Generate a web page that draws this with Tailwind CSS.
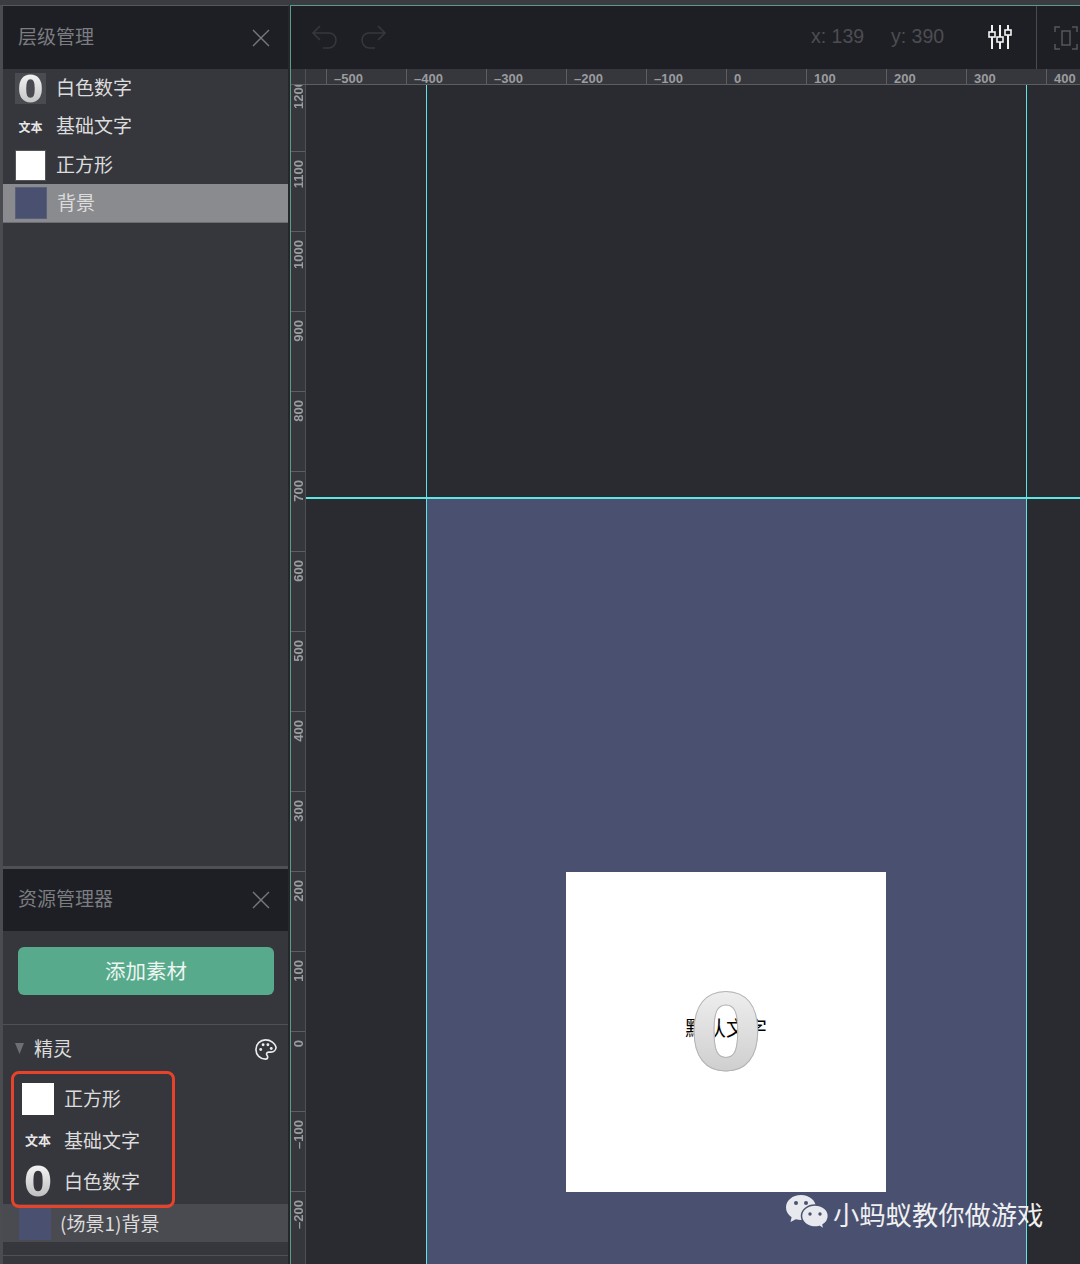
<!DOCTYPE html>
<html lang="zh-CN">
  <head>
    <meta charset="UTF-8" />
    <meta name="viewport" content="width=device-width, initial-scale=1.0" />
    <title>层级管理</title>
    <script src="https://cdn.jsdelivr.net/npm/@tailwindcss/browser@4"></script>
  </head>
  <body class="w-[1080px] h-[1264px] overflow-hidden bg-[#3a3c41] font-['Noto_Sans_CJK_SC','Liberation_Sans',sans-serif] text-[19px] text-[#dcdcdc]">
    <div class="h-[5px]"></div>
    <div class="flex h-[1259px]">
      <!-- Sidebar -->
      <aside class="w-[290px] shrink-0 border-l-[3px] border-t border-r-2 border-l-[#4b4c50] border-t-[#55575a] border-r-[#26272b] bg-[#36373d] flex flex-col">
        <!-- Layers -->
        <div class="h-[63px] shrink-0 bg-[#1e1f24] flex items-center justify-between pl-[15px] pr-[18px] text-[#7b7d81]">
          <span class="mt-[-2px]">层级管理</span>
          <svg class="w-[18px] h-[18px]" viewBox="0 0 18 18" fill="none" stroke="#76787c" stroke-width="1.4"><path d="M1 1l16 16M17 1L1 17" /></svg>
        </div>
        <div class="h-[797px] shrink-0 flex flex-col">
          <div class="h-[38px] flex items-center pl-[12px] gap-[10px]">
            <div class="w-[31px] h-[31px] mt-[1px] bg-[#4a4b50] flex items-center justify-center">
              <span class="font-['DejaVu_Sans'] font-bold text-[38px] leading-none bg-linear-to-b from-[#fafafa] to-[#bdbdbd] bg-clip-text text-transparent">0</span>
            </div>
            <span class="mt-[-2px]">白色数字</span>
          </div>
          <div class="h-[39px] flex items-center pl-[12px] gap-[10px]">
            <div class="w-[31px] flex justify-center text-[12px] font-bold text-[#e6e6e6]">文本</div>
            <span class="mt-[-2px]">基础文字</span>
          </div>
          <div class="h-[38px] flex items-center pl-[12px] gap-[10px]">
            <div class="w-[31px] h-[31px] bg-white border border-[#55575a]"></div>
            <span class="mt-[-2px]">正方形</span>
          </div>
          <div class="h-[39px] flex items-center pl-[12px] gap-[10px] bg-[#8a8b8e] border-b border-[#6c6d71]">
            <div class="w-[32px] h-[32px] bg-[#4a5170] border border-[#5a6079]"></div>
            <span class="mt-[-2px]">背景</span>
          </div>
        </div>
        <div class="h-[3px] shrink-0 bg-[#4f5054]"></div>
        <!-- Assets -->
        <div class="h-[62px] shrink-0 bg-[#1e1f24] flex items-center justify-between pl-[15px] pr-[18px] text-[#7b7d81]">
          <span class="mt-[-3px]">资源管理器</span>
          <svg class="w-[18px] h-[18px]" viewBox="0 0 18 18" fill="none" stroke="#76787c" stroke-width="1.4"><path d="M1 1l16 16M17 1L1 17" /></svg>
        </div>
        <div class="h-[94px] shrink-0 pt-[16px] px-[15px] border-b border-[#4f5054]">
          <button class="w-[256px] h-[48px] pb-[2px] rounded-[6px] bg-[#57aa8b] text-[#eef5f2] text-[20.500px] flex items-center justify-center">添加素材</button>
        </div>
        <div class="relative grow">
          <div class="h-[53px] flex items-start justify-between pt-[11px] pl-[12px] pr-[11px]">
            <div class="flex items-center gap-[10px]">
              <svg class="w-[9px] h-[11px]" viewBox="0 0 9 11" fill="#6d6f73"><path d="M0 0h9L4.500 11z" /></svg>
              <span class="leading-[24px]">精灵</span>
            </div>
            <svg class="w-[23px] h-[23px] mt-[2px]" viewBox="0 0 24 24" fill="none" stroke="#ececec" stroke-width="1.7"><path d="M12 2C6.400 2 2 6.400 2 12s4.400 10 10 10c1.500 0 2.300-1 2.300-2.200 0-.6-.2-1-.6-1.500-.4-.5-.6-1-.6-1.500 0-1.200 1-2.100 2.200-2.100h2.400c3 0 5.300-2.200 5.300-5C22 5.500 17.500 2 12 2z" /><circle cx="7" cy="12" r="1.500" fill="#ececec" stroke="none" /><circle cx="9.500" cy="7" r="1.500" fill="#ececec" stroke="none" /><circle cx="14.500" cy="7" r="1.500" fill="#ececec" stroke="none" /><circle cx="18" cy="11" r="1.500" fill="#ececec" stroke="none" /></svg>
          </div>
          <div class="h-[41px] flex items-center pl-[19px] gap-[10px]">
            <div class="w-[32px] h-[32px] bg-white"></div>
            <span>正方形</span>
          </div>
          <div class="h-[42px] flex items-center pl-[19px] gap-[10px]">
            <div class="w-[32px] flex justify-center text-[13px] font-bold text-[#e6e6e6]">文本</div>
            <span>基础文字</span>
          </div>
          <div class="h-[41px] flex items-center pl-[19px] gap-[10px]">
            <div class="w-[32px] h-[32px] mt-[2px] flex items-center justify-center">
              <span class="font-['DejaVu_Sans'] font-bold text-[41px] leading-none bg-linear-to-b from-[#fafafa] to-[#b5b5b5] bg-clip-text text-transparent">0</span>
            </div>
            <span>白色数字</span>
          </div>
          <div class="h-[38px] mt-[2px] bg-[#4a4b50] flex items-center pl-[16px] gap-[9px]">
            <div class="w-[32px] h-[33px] bg-[#4a5170]"></div>
            <span>(场景1)背景</span>
          </div>
          <div class="mt-[13px] border-t border-[#4f5054]"></div>
          <!-- annotation box -->
          <div class="absolute left-[8px] top-[46px] w-[164px] h-[137px] border-[3px] border-[#e8432a] rounded-[8px]"></div>
        </div>
      </aside>

      <!-- Main -->
      <main class="w-[790px] shrink-0 border-l border-t border-[#5b9c86] flex flex-col bg-[#2a2b30]">
        <div class="h-[63px] shrink-0 bg-[#1e1f24] flex items-center text-[19.500px] text-[#4c4d52] font-['Liberation_Sans',sans-serif] whitespace-nowrap">
          <svg class="ml-[20px] w-[28px] h-[26px] mt-[-1px]" viewBox="0 0 28 26" fill="none" stroke="#36383c" stroke-width="1.600"><path d="M9 2L2 9l7 7M2 9h16c4 0 7 3 7 7s-3 8-7 8h-6" /></svg>
          <svg class="ml-[20px] w-[28px] h-[26px] mt-[-1px]" viewBox="0 0 28 26" fill="none" stroke="#36383c" stroke-width="1.600"><path d="M19 2l7 7-7 7M26 9H10c-4 0-7 3-7 7s3 8 7 8h6" /></svg>
          <span class="ml-[424px] w-[80px] mt-[-1px]">x: 139</span>
          <span class="w-[96px] mt-[-1px]">y: 390</span>
          <svg class="w-[26px] h-[26px] mt-[-1px]" viewBox="0 0 26 26" fill="none" stroke="#f2f2f2" stroke-width="2"><path d="M5 1v7M5 13v12M13 1v12M13 18v7M21 1v5M21 11v14" /><rect x="2" y="8" width="6" height="5" stroke-width="1.600" /><rect x="10" y="13" width="6" height="5" stroke-width="1.600" /><rect x="18" y="6" width="6" height="5" stroke-width="1.600" /></svg>
          <div class="ml-[23px] w-px h-full bg-[#4a4b4f]"></div>
          <svg class="ml-[17px] w-[24px] h-[24px]" viewBox="0 0 24 24" fill="none" stroke="#55575b" stroke-width="1.500"><path d="M6 1H1v5M18 1h5v5M6 23H1v-5M18 23h5v-5" /><rect x="8" y="5" width="8" height="14" /></svg>
        </div>

        <!-- Horizontal ruler -->
        <div class="h-[16px] shrink-0 flex bg-[#36373c] border-b border-[#5c5e62] text-[13px] font-bold text-[#9b9c9f] font-['Liberation_Sans',sans-serif] leading-[19px] overflow-hidden">
          <div class="w-[15px] shrink-0 border-r border-[#4e5054]"></div>
          <div class="w-[20px] shrink-0"></div>
          <div class="w-[80px] shrink-0 border-l border-[#5c5e62] pl-[7px]">–500</div>
          <div class="w-[80px] shrink-0 border-l border-[#5c5e62] pl-[7px]">–400</div>
          <div class="w-[80px] shrink-0 border-l border-[#5c5e62] pl-[7px]">–300</div>
          <div class="w-[80px] shrink-0 border-l border-[#5c5e62] pl-[7px]">–200</div>
          <div class="w-[80px] shrink-0 border-l border-[#5c5e62] pl-[7px]">–100</div>
          <div class="w-[80px] shrink-0 border-l border-[#5c5e62] pl-[7px]">0</div>
          <div class="w-[80px] shrink-0 border-l border-[#5c5e62] pl-[7px]">100</div>
          <div class="w-[80px] shrink-0 border-l border-[#5c5e62] pl-[7px]">200</div>
          <div class="w-[80px] shrink-0 border-l border-[#5c5e62] pl-[7px]">300</div>
          <div class="w-[80px] shrink-0 border-l border-[#5c5e62] pl-[7px]">400</div>
        </div>

        <div class="flex grow overflow-hidden">
          <!-- Vertical ruler -->
          <div class="w-[15px] shrink-0 bg-[#36373c] border-r border-[#4e5054] overflow-hidden text-[13px] font-bold text-[#9b9c9f] font-['Liberation_Sans',sans-serif] leading-[14px]">
            <div class="mt-[-14px] flex flex-col">
              <div class="h-[80px] shrink-0 border-t border-[#5c5e62] pt-[8px] pl-px"><span class="block rotate-180 [writing-mode:vertical-rl]">1200</span></div>
              <div class="h-[80px] shrink-0 border-t border-[#5c5e62] pt-[8px] pl-px"><span class="block rotate-180 [writing-mode:vertical-rl]">1100</span></div>
              <div class="h-[80px] shrink-0 border-t border-[#5c5e62] pt-[8px] pl-px"><span class="block rotate-180 [writing-mode:vertical-rl]">1000</span></div>
              <div class="h-[80px] shrink-0 border-t border-[#5c5e62] pt-[8px] pl-px"><span class="block rotate-180 [writing-mode:vertical-rl]">900</span></div>
              <div class="h-[80px] shrink-0 border-t border-[#5c5e62] pt-[8px] pl-px"><span class="block rotate-180 [writing-mode:vertical-rl]">800</span></div>
              <div class="h-[80px] shrink-0 border-t border-[#5c5e62] pt-[8px] pl-px"><span class="block rotate-180 [writing-mode:vertical-rl]">700</span></div>
              <div class="h-[80px] shrink-0 border-t border-[#5c5e62] pt-[8px] pl-px"><span class="block rotate-180 [writing-mode:vertical-rl]">600</span></div>
              <div class="h-[80px] shrink-0 border-t border-[#5c5e62] pt-[8px] pl-px"><span class="block rotate-180 [writing-mode:vertical-rl]">500</span></div>
              <div class="h-[80px] shrink-0 border-t border-[#5c5e62] pt-[8px] pl-px"><span class="block rotate-180 [writing-mode:vertical-rl]">400</span></div>
              <div class="h-[80px] shrink-0 border-t border-[#5c5e62] pt-[8px] pl-px"><span class="block rotate-180 [writing-mode:vertical-rl]">300</span></div>
              <div class="h-[80px] shrink-0 border-t border-[#5c5e62] pt-[8px] pl-px"><span class="block rotate-180 [writing-mode:vertical-rl]">200</span></div>
              <div class="h-[80px] shrink-0 border-t border-[#5c5e62] pt-[8px] pl-px"><span class="block rotate-180 [writing-mode:vertical-rl]">100</span></div>
              <div class="h-[80px] shrink-0 border-t border-[#5c5e62] pt-[8px] pl-px"><span class="block rotate-180 [writing-mode:vertical-rl]">0</span></div>
              <div class="h-[80px] shrink-0 border-t border-[#5c5e62] pt-[8px] pl-px"><span class="block rotate-180 [writing-mode:vertical-rl]">–100</span></div>
              <div class="h-[80px] shrink-0 border-t border-[#5c5e62] pt-[8px] pl-px"><span class="block rotate-180 [writing-mode:vertical-rl]">–200</span></div>
            </div>
          </div>

          <!-- Scene canvas: x 306, y 85 -->
          <div class="relative grow">
            <div class="absolute left-[121px] top-[413px] w-[599px] h-[800px] bg-[#4a5170]"></div>
            <div class="absolute left-[260px] top-[787px] w-[320px] h-[320px] bg-white flex items-center justify-center">
              <span class="absolute mt-[-10px] text-[20.500px] leading-none text-black whitespace-nowrap">默认文字</span>
              <span class="relative mt-[3px] font-['DejaVu_Sans'] font-bold text-[106px] leading-none bg-linear-to-b from-[#f2f2f2] to-[#c9c9c9] bg-clip-text text-transparent [-webkit-text-stroke:1px_#b4b4b4]">0</span>
            </div>
            <div class="absolute left-[119.500px] top-0 w-[1.500px] h-full bg-[#5fe6e4]"></div>
            <div class="absolute left-[719.500px] top-0 w-[1.500px] h-full bg-[#5fe6e4]"></div>
            <div class="absolute left-0 top-[412px] w-full h-[1.500px] bg-[#5fe6e4]"></div>

            <!-- Watermark -->
            <div class="absolute left-[479px] top-[1111px] flex items-center gap-[4px] text-[26.300px] leading-[36px] text-[#f0f0f0] whitespace-nowrap">
              <svg class="w-[44px] h-[37px] mt-[-3px]" viewBox="0 0 44 37" fill="#e8e9ee">
                <path d="M16 1C7.500 1 1 6.500 1 13.500c0 4 2.200 7.500 5.600 9.800L5.500 28l5.300-2.700c1.700.5 3.400.7 5.200.7 8.500 0 15-5.600 15-12.500S24.500 1 16 1z" />
                <path d="M30 11c-7.500 0-13.500 5-13.500 11S22.500 33 30 33c1.500 0 3-.2 4.400-.6l4.600 3-1-4.500c3.200-2.100 5.400-5.300 5.400-8.900 0-6-5.900-11-13.400-11z" stroke="#4a5170" stroke-width="1.500" />
                <circle cx="11" cy="9" r="2" fill="#4a5170" />
                <circle cx="21" cy="9" r="2" fill="#4a5170" />
                <circle cx="25" cy="20" r="1.700" fill="#4a5170" />
                <circle cx="35" cy="20" r="1.700" fill="#4a5170" />
              </svg>
              <span>小蚂蚁教你做游戏</span>
            </div>
          </div>
        </div>
      </main>
    </div>
  </body>
</html>
